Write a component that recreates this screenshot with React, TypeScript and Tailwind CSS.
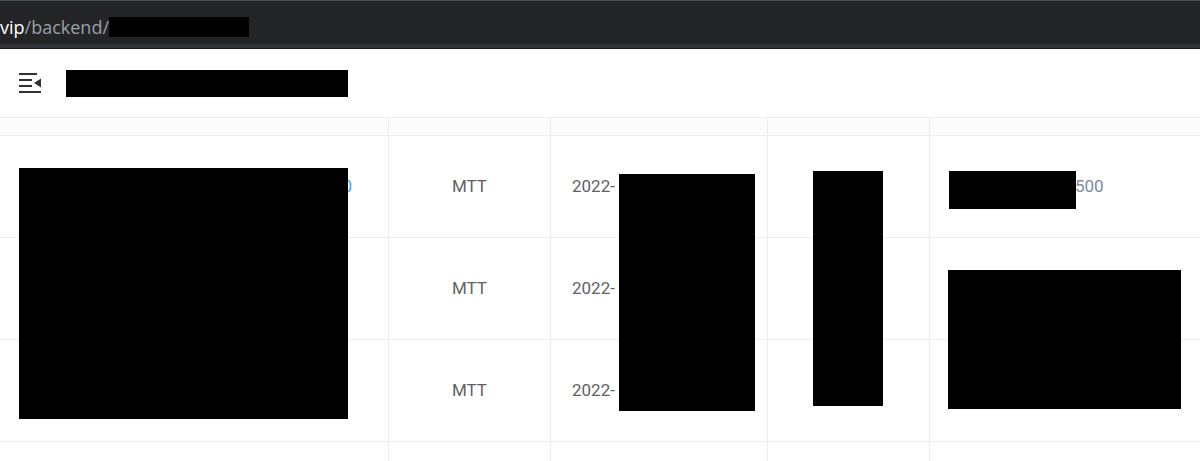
import React from 'react';

const rows = [0, 1, 2];

function FoldIcon() {
  return (
    <svg width="24" height="22" viewBox="0 0 24 22" className="text-[#303133]">
      <rect x="1" y="1" width="18" height="2" fill="currentColor" />
      <rect x="1" y="7" width="13" height="2" fill="currentColor" />
      <rect x="1" y="13" width="13" height="2" fill="currentColor" />
      <rect x="1" y="19" width="22" height="2" fill="currentColor" />
      <path d="M16 11 L23 6.5 L23 15.5 Z" fill="currentColor" />
    </svg>
  );
}

export default function App() {
  return (
    <div className="relative w-[1200px] h-[461px] overflow-hidden bg-white" style={{ fontFamily: 'Roboto, "Liberation Sans", sans-serif' }}>
      {/* barra de direcciones */}
      <div className="h-[49px] bg-[#232426] border-t border-[#4a4c50] flex flex-col">
        <div className="flex-1 flex items-center pt-[9px] text-[18px] leading-none" style={{ fontFamily: '"Open Sans", "Liberation Sans", sans-serif' }}>
          <span className="text-white">vip</span>
          <span className="text-[#9aa0a6]">/backend/</span>
          <span className="w-[140px] h-[20px] bg-black" />
        </div>
        <div className="h-[5px] bg-[#303236] border-b border-[#1b1c1e]" />
      </div>

      {/* cabecera */}
      <div className="h-[68px] flex items-center gap-6 pl-[18px]">
        <FoldIcon />
        <div className="w-[282px] h-[27px] bg-black" />
      </div>

      {/* tabla */}
      <div className="relative">
        <div className="grid grid-cols-[389px_162px_217px_162px_270px] h-[19px] border-t border-b border-[#ebeef5] bg-[#fcfcfd]">
          <div className="border-r border-[#ebeef5]" />
          <div className="border-r border-[#ebeef5]" />
          <div className="border-r border-[#ebeef5]" />
          <div className="border-r border-[#ebeef5]" />
          <div />
        </div>
        {rows.map((r) => (
          <div key={r} className="grid grid-cols-[389px_162px_217px_162px_270px] h-[102px] border-b border-[#ebeef5] text-[17px] text-[#606266]">
            <div className="border-r border-[#ebeef5] flex items-center justify-end pr-[36px] text-[#409eff]">{r === 0 ? '0' : ''}</div>
            <div className="border-r border-[#ebeef5] flex items-center justify-center">MTT</div>
            <div className="border-r border-[#ebeef5] flex items-center pl-[21px]">2022-</div>
            <div className="border-r border-[#ebeef5]" />
            <div className="flex items-center pl-[145px] text-[#7a8a9e]">{r === 0 ? '500' : ''}</div>
          </div>
        ))}
        <div className="grid grid-cols-[389px_162px_217px_162px_270px] h-[30px]">
          <div className="border-r border-[#ebeef5]" />
          <div className="border-r border-[#ebeef5]" />
          <div className="border-r border-[#ebeef5]" />
          <div className="border-r border-[#ebeef5]" />
          <div />
        </div>

        {/* tachaduras */}
        <div className="absolute left-[19px] top-[51px] w-[329px] h-[251px] bg-black" />
        <div className="absolute left-[619px] top-[57px] w-[136px] h-[237px] bg-black" />
        <div className="absolute left-[813px] top-[54px] w-[70px] h-[235px] bg-black" />
        <div className="absolute left-[949px] top-[54px] w-[127px] h-[38px] bg-black" />
        <div className="absolute left-[948px] top-[153px] w-[233px] h-[139px] bg-black" />
      </div>
    </div>
  );
}
